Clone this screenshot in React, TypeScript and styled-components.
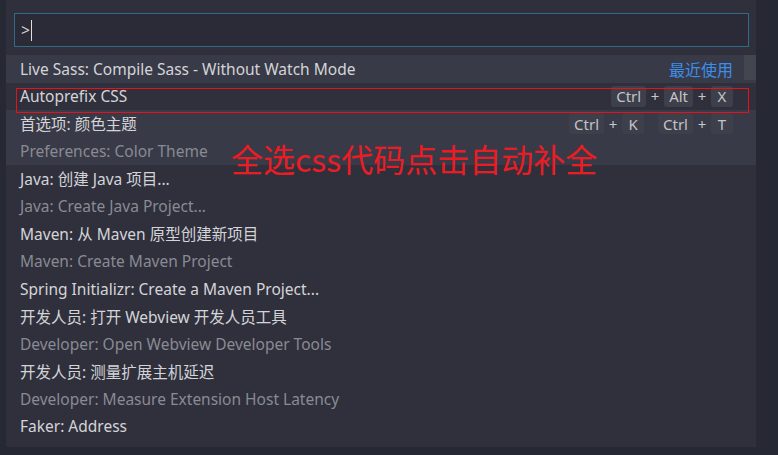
import React from "react";
import styled, { createGlobalStyle } from "styled-components";

const GlobalStyle = createGlobalStyle`
  html, body { margin: 0; padding: 0; background: #262833; }
  body { font-family: "Noto Sans", "Noto Sans CJK SC", sans-serif; }
`;

const Page = styled.div`
  width: 778px;
  height: 455px;
  box-sizing: border-box;
  padding: 0 22px 8px 6px;
  background: #262833;
`;

const Panel = styled.div`
  position: relative;
  height: 447px;
  background: #2f303c;
  padding-top: 13px;
  box-sizing: border-box;
  overflow: hidden;
`;

const InputWrap = styled.div`
  padding: 0 7px 0 8px;
`;

const InputBox = styled.div`
  height: 34px;
  box-sizing: border-box;
  border: 1px solid #2d6d88;
  background: #2a2b37;
  display: flex;
  align-items: center;
  padding-left: 6px;
  color: #d0d0d0;
  font-size: 15.5px;
`;

const Caret = styled.span`
  display: inline-block;
  width: 1px;
  height: 21px;
  background: #e0e0e0;
  margin-left: 1px;
`;

const List = styled.div`
  margin-top: 8px;
  display: flex;
  flex-direction: column;
`;

const Row = styled.div<{ $hl?: boolean; $lines?: number }>`
  height: ${(p) => (p.$lines ?? 1) * 27.5}px;
  background: ${(p) => (p.$hl ? "#383a47" : "transparent")};
  padding: 0 23px 0 14px;
  display: flex;
  flex-direction: column;
  justify-content: center;
`;

const Line = styled.div`
  height: 27.5px;
  display: flex;
  align-items: center;
  justify-content: space-between;
`;

const Label = styled.span<{ $dim?: boolean }>`
  font-size: 15.5px;
  color: ${(p) => (p.$dim ? "#898a93" : "#d4d4d8")};
  white-space: nowrap;
`;

const Recent = styled.span`
  font-size: 16px;
  color: #3b8eea;
`;

const Keys = styled.div`
  display: flex;
  align-items: center;
  gap: 14px;
`;

const Chord = styled.div`
  display: flex;
  align-items: center;
`;

const Key = styled.span`
  height: 21px;
  box-sizing: border-box;
  padding: 0 5px;
  background: #3d3f4b;
  border-radius: 3px;
  color: #c4c4c8;
  font-size: 15px;
  display: inline-flex;
  align-items: center;
  justify-content: center;
  min-width: 22px;
`;

const Plus = styled.span`
  width: 18px;
  text-align: center;
  color: #c8c8cc;
  font-size: 15px;
`;

const Scroll = styled.div`
  position: absolute;
  right: 0;
  top: 55px;
  width: 12px;
  height: 25px;
  background: #44464f;
`;

const RedBox = styled.div`
  position: absolute;
  left: 10px;
  top: 88px;
  width: 733px;
  height: 25px;
  box-sizing: border-box;
  border: 1px solid #e8111b;
  pointer-events: none;
`;

const Note = styled.div`
  position: absolute;
  left: 225px;
  top: 136px;
  color: #ec1c24;
  font-size: 32px;
  line-height: 44px;
  font-family: "Noto Sans CJK SC", sans-serif;
  white-space: nowrap;
`;

type KB = string[][];

const Keybinding: React.FC<{ chords: KB }> = ({ chords }) => (
  <Keys>
    {chords.map((c, i) => (
      <Chord key={i}>
        {c.map((k, j) => (
          <React.Fragment key={j}>
            {j > 0 && <Plus>+</Plus>}
            <Key>{k}</Key>
          </React.Fragment>
        ))}
      </Chord>
    ))}
  </Keys>
);

type Item = {
  label: string;
  detail?: string;
  hl?: boolean;
  recent?: boolean;
  keys?: KB;
};

const items: Item[] = [
  { label: "Live Sass: Compile Sass - Without Watch Mode", hl: true, recent: true },
  { label: "Autoprefix CSS", keys: [["Ctrl", "Alt", "X"]] },
  {
    label: "首选项: 颜色主题",
    detail: "Preferences: Color Theme",
    hl: true,
    keys: [["Ctrl", "K"], ["Ctrl", "T"]],
  },
  { label: "Java: 创建 Java 项目...", detail: "Java: Create Java Project..." },
  { label: "Maven: 从 Maven 原型创建新项目", detail: "Maven: Create Maven Project" },
  { label: "Spring Initializr: Create a Maven Project..." },
  { label: "开发人员: 打开 Webview 开发人员工具", detail: "Developer: Open Webview Developer Tools" },
  { label: "开发人员: 测量扩展主机延迟", detail: "Developer: Measure Extension Host Latency" },
  { label: "Faker: Address" },
];

export default function App() {
  return (
    <>
      <GlobalStyle />
      <Page>
        <Panel>
          <InputWrap>
            <InputBox>
              &gt;
              <Caret />
            </InputBox>
          </InputWrap>
          <List>
            {items.map((it, i) => (
              <Row key={i} $hl={it.hl} $lines={it.detail ? 2 : 1}>
                <Line>
                  <Label>{it.label}</Label>
                  {it.recent && <Recent>最近使用</Recent>}
                  {it.keys && <Keybinding chords={it.keys} />}
                </Line>
                {it.detail && (
                  <Line>
                    <Label $dim>{it.detail}</Label>
                  </Line>
                )}
              </Row>
            ))}
          </List>
          <Scroll />
          <RedBox />
          <Note>全选css代码点击自动补全</Note>
        </Panel>
      </Page>
    </>
  );
}
